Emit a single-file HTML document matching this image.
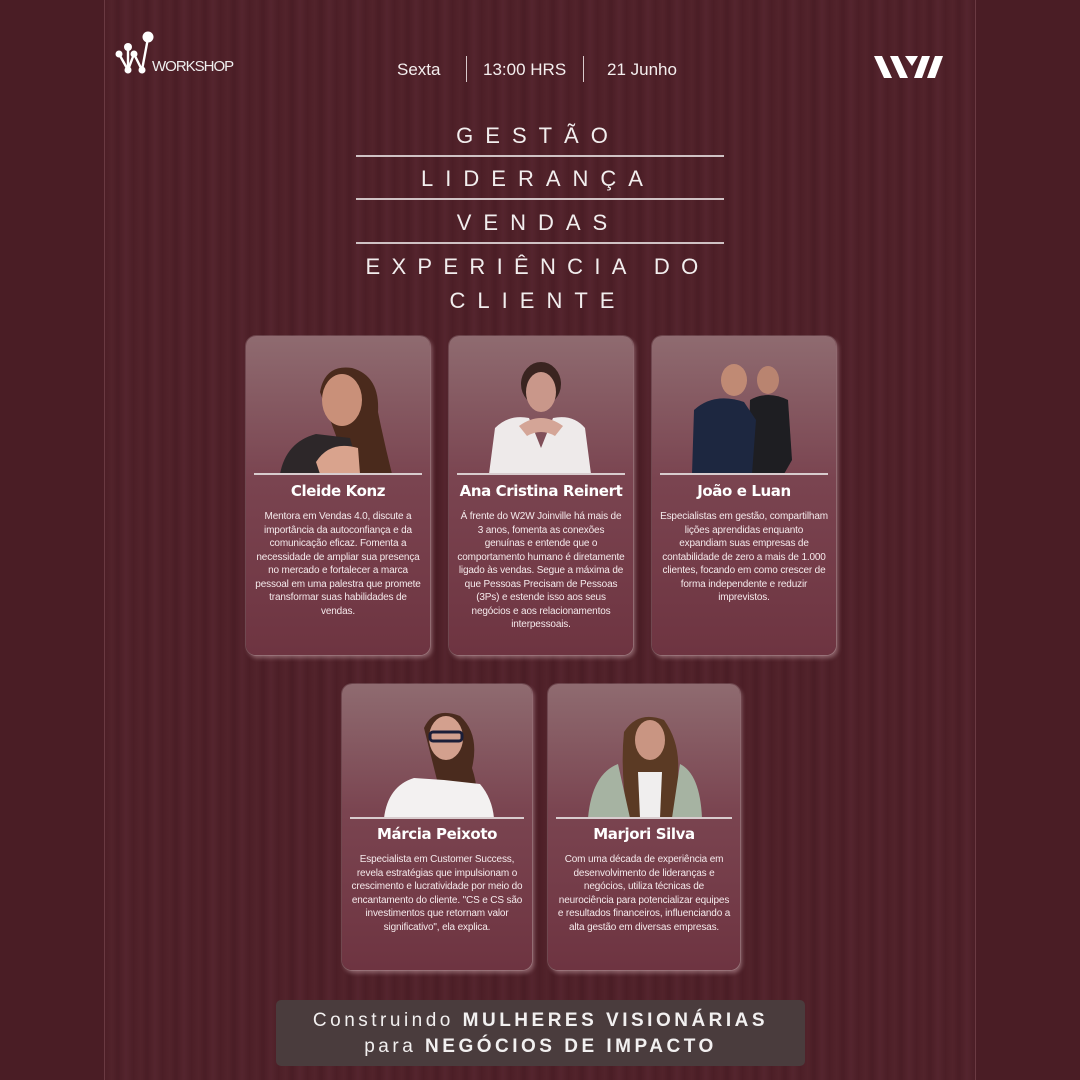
<!DOCTYPE html>
<html><head><meta charset="utf-8"><style>
*{margin:0;padding:0;box-sizing:border-box}
body{width:1080px;height:1080px;background:#4a1d25;font-family:"Liberation Sans","DejaVu Sans",sans-serif;color:#fff;position:relative;overflow:hidden}
.panel{position:absolute;left:104px;top:0;width:872px;height:1080px;background:repeating-linear-gradient(90deg,#4d1f27 0,#52232b 7px,#4a1d25 13px,#55252e 21px,#4b1e26 29px);border-left:1px solid #6a3a42;border-right:1px solid #6a3a42}
.abs{position:absolute}
.top{top:60px;color:#f4eeee;font-size:17px}
.sep{position:absolute;top:56px;width:1px;height:26px;background:#d9c9cb}
.kw{position:absolute;left:292px;width:480px;text-align:center;font-size:22px;letter-spacing:12px;padding-left:12px;color:#f2eeee;white-space:nowrap}
.hr{position:absolute;left:356px;width:368px;height:2px;background:#cfc2c4}
.card{position:absolute;border-radius:10px;background:linear-gradient(#8f6b70,#7a4450 45%,#6e3441);box-shadow:2px 3px 4px rgba(255,220,225,.35),0 0 0 1px rgba(255,255,255,.15)}
.card .ln{position:absolute;left:8px;right:8px;height:2px;background:#d8ccce}
.card h3{position:absolute;left:0;right:0;text-align:center;font-size:15px;font-weight:bold;font-family:"DejaVu Sans",sans-serif;letter-spacing:-.4px}
.card p{position:absolute;left:8px;right:8px;text-align:center;font-size:10px;line-height:13.5px;color:#f5eaec;letter-spacing:-.15px}
.card svg{position:absolute}
.banner{position:absolute;left:276px;top:1000px;width:529px;height:66px;background:#4a3c3d;border-radius:5px;text-align:center;font-size:19px;letter-spacing:3.5px;line-height:26px;padding-top:8px;color:#f2f0f0}
.banner b{font-weight:bold}
</style></head><body>
<div class="panel"></div>

<svg class="abs" style="left:114px;top:30px" width="134" height="48" viewBox="0 0 134 48">
<g fill="none" stroke="#fff" stroke-width="2.4"><path d="M5 24 L14 40 L20 24 L28 40 L34 8"/><path d="M14 18 L14 40"/></g>
<g fill="#fff"><circle cx="5" cy="24" r="3.5"/><circle cx="14" cy="17" r="4"/><circle cx="14" cy="40" r="3.5"/><circle cx="20" cy="24" r="3.5"/><circle cx="28" cy="40" r="3.5"/><circle cx="34" cy="7" r="5.5"/></g>
<text x="38" y="41" font-size="15" fill="#eee" font-family="Liberation Sans,sans-serif" letter-spacing="-1">WORKSHOP</text>
</svg>

<div class="abs top" style="left:397px">Sexta</div>
<div class="sep" style="left:466px"></div>
<div class="abs top" style="left:483px">13:00 HRS</div>
<div class="sep" style="left:583px"></div>
<div class="abs top" style="left:607px">21 Junho</div>

<svg class="abs" style="left:872px;top:52px" width="74" height="28" viewBox="0 0 74 28">
<g fill="#fff"><path d="M2 4 L10 4 L20 26 L12 26Z"/><path d="M18 4 L26 4 L36 26 L28 26Z"/><path d="M33 4 L46 4 L40 14Z"/><path d="M50 4 L58 4 L50 26 L42 26Z"/><path d="M63 4 L71 4 L63 26 L55 26Z"/></g>
</svg>

<div class="kw" style="top:123px">GESTÃO</div>
<div class="hr" style="top:155px"></div>
<div class="kw" style="top:166px">LIDERANÇA</div>
<div class="hr" style="top:198px"></div>
<div class="kw" style="top:210px">VENDAS</div>
<div class="hr" style="top:242px"></div>
<div class="kw" style="top:254px;letter-spacing:11.3px;padding-left:11px">EXPERIÊNCIA DO</div>
<div class="kw" style="top:288px">CLIENTE</div>

<!-- Card 1 -->
<div class="card" style="left:246px;top:336px;width:184px;height:319px">
<svg style="left:34px;top:26px" width="116" height="112" viewBox="0 0 116 112">
<path d="M40 30 Q45 2 72 6 Q100 14 98 50 Q104 80 112 112 L70 112 Z" fill="#4a2a1c"/>
<path d="M0 112 Q6 80 36 72 L70 76 L80 112Z" fill="#2d2729"/>
<ellipse cx="62" cy="38" rx="20" ry="26" fill="#c99079"/>
<path d="M36 100 Q50 78 78 86 L80 112 L40 112Z" fill="#d9a38d"/>
</svg>
<div class="ln" style="top:137px"></div>
<h3 style="top:146px">Cleide Konz</h3>
<p style="top:174px">Mentora em Vendas 4.0, discute a importância da autoconfiança e da comunicação eficaz. Fomenta a necessidade de ampliar sua presença no mercado e fortalecer a marca pessoal em uma palestra que promete transformar suas habilidades de vendas.</p>
</div>

<!-- Card 2 -->
<div class="card" style="left:449px;top:336px;width:184px;height:319px">
<svg style="left:40px;top:22px" width="104" height="116" viewBox="0 0 104 116">
<ellipse cx="52" cy="26" rx="20" ry="22" fill="#3a2420"/>
<ellipse cx="52" cy="34" rx="15" ry="20" fill="#c9978a"/>
<path d="M0 116 L6 70 Q20 56 40 60 L52 90 L64 60 Q84 56 96 70 L102 116Z" fill="#eeeaea"/>
<path d="M30 68 Q52 52 74 68 L66 78 Q52 70 38 78Z" fill="#d4a597"/>
</svg>
<div class="ln" style="top:137px"></div>
<h3 style="top:146px">Ana Cristina Reinert</h3>
<p style="top:174px">Á frente do W2W Joinville há mais de 3 anos, fomenta as conexões genuínas e entende que o comportamento humano é diretamente ligado às vendas. Segue a máxima de que Pessoas Precisam de Pessoas (3Ps) e estende isso aos seus negócios e aos relacionamentos interpessoais.</p>
</div>

<!-- Card 3 -->
<div class="card" style="left:652px;top:336px;width:184px;height:319px">
<svg style="left:36px;top:24px" width="110" height="114" viewBox="0 0 110 114">
<ellipse cx="80" cy="20" rx="11" ry="14" fill="#b98470"/>
<path d="M60 114 L62 40 Q80 30 100 40 L104 100 L96 114Z" fill="#1e1e22"/>
<ellipse cx="46" cy="20" rx="13" ry="16" fill="#c08a74"/>
<path d="M4 114 L6 50 Q26 32 56 42 L68 60 L64 114Z" fill="#1d2740"/>
</svg>
<div class="ln" style="top:137px"></div>
<h3 style="top:146px">João e Luan</h3>
<p style="top:174px">Especialistas em gestão, compartilham lições aprendidas enquanto expandiam suas empresas de contabilidade de zero a mais de 1.000 clientes, focando em como crescer de forma independente e reduzir imprevistos.</p>
</div>

<!-- Card 4 -->
<div class="card" style="left:342px;top:684px;width:190px;height:286px">
<svg style="left:42px;top:24px" width="110" height="110" viewBox="0 0 110 110">
<path d="M40 20 Q50 -2 76 8 Q96 26 88 60 Q96 84 90 100 L60 100Z" fill="#4a2b1e"/>
<ellipse cx="62" cy="30" rx="17" ry="22" fill="#d3a08e"/>
<rect x="46" y="24" width="32" height="9" rx="3" fill="none" stroke="#1b1e38" stroke-width="3"/>
<path d="M0 110 Q4 78 30 70 L60 72 L96 76 Q108 90 110 110Z" fill="#f3f1f1"/>
</svg>
<div class="ln" style="top:133px"></div>
<h3 style="top:141px">Márcia Peixoto</h3>
<p style="top:169px">Especialista em Customer Success, revela estratégias que impulsionam o crescimento e lucratividade por meio do encantamento do cliente. "CS e CS são investimentos que retornam valor significativo", ela explica.</p>
</div>

<!-- Card 5 -->
<div class="card" style="left:548px;top:684px;width:192px;height:286px">
<svg style="left:40px;top:28px" width="116" height="106" viewBox="0 0 116 106">
<path d="M36 20 Q50 -2 76 8 Q92 30 90 60 Q92 84 84 106 L40 106 Q32 60 36 20Z" fill="#5b3a24"/>
<ellipse cx="62" cy="28" rx="15" ry="20" fill="#c99582"/>
<path d="M0 106 Q4 62 30 52 L42 106Z M84 106 L92 52 Q112 62 114 106Z" fill="#a6b3a2"/>
<path d="M50 60 L74 60 L72 106 L52 106Z" fill="#f0eeee"/>
</svg>
<div class="ln" style="top:133px"></div>
<h3 style="top:141px">Marjori Silva</h3>
<p style="top:169px">Com uma década de experiência em desenvolvimento de lideranças e negócios, utiliza técnicas de neurociência para potencializar equipes e resultados financeiros, influenciando a alta gestão em diversas empresas.</p>
</div>

<div class="banner">Construindo <b>MULHERES VISIONÁRIAS</b><br>para <b>NEGÓCIOS DE IMPACTO</b></div>
</body></html>
